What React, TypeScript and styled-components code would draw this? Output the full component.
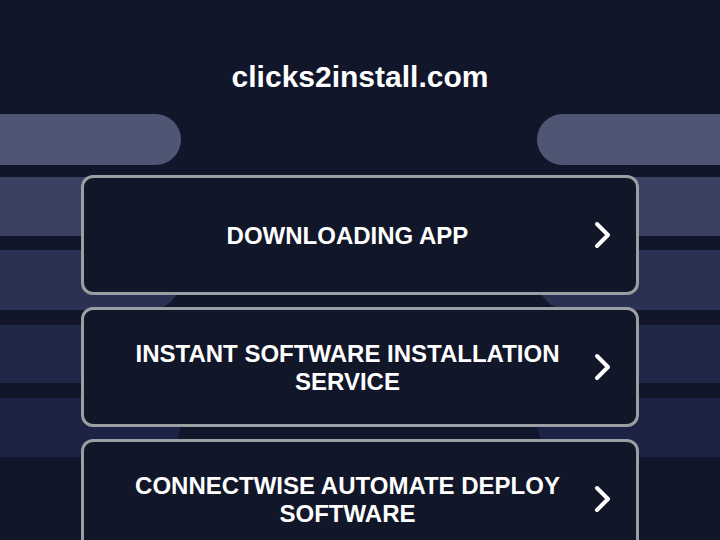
import styled, { createGlobalStyle } from 'styled-components';

const GlobalStyle = createGlobalStyle`
  html, body {
    margin: 0;
    padding: 0;
    background-color: #11162b;
  }

  body {
    font-family: 'Liberation Sans', Arial, sans-serif;
    overflow: hidden;
  }
`;

interface Stripe {
  color: string;
  height: number;
  gapBefore: number;
  reach: number;
}

const stripes: Stripe[] = [
  { color: '#4e5673', height: 51, gapBefore: 114, reach: 181 },
  { color: '#3a4162', height: 59, gapBefore: 12, reach: 200 },
  { color: '#2a3153', height: 60, gapBefore: 14, reach: 180 },
  { color: '#1f2749', height: 58, gapBefore: 15, reach: 200 },
  { color: '#1c2344', height: 59, gapBefore: 15, reach: 180 },
];

const links = [
  { id: 'download', label: 'DOWNLOADING APP' },
  { id: 'instant', label: 'INSTANT SOFTWARE INSTALLATION SERVICE' },
  { id: 'connectwise', label: 'CONNECTWISE AUTOMATE DEPLOY SOFTWARE' },
];

const ChevronIcon = () => (
  <svg width="18" height="28" viewBox="0 0 18 28" fill="none">
    <path
      d="M3 3 L14 14 L3 25"
      stroke="#ffffff"
      strokeWidth="4"
      strokeLinecap="round"
      strokeLinejoin="round"
    />
  </svg>
);

export default function App() {
  return (
    <>
      <GlobalStyle />
      <Page>
        <Backdrop>
          {stripes.map((s, i) => (
            <StripeRow key={i} $height={s.height} $gapBefore={s.gapBefore}>
              <StripeLeft $color={s.color} $reach={s.reach} />
              <StripeRight $color={s.color} $reach={s.reach} />
            </StripeRow>
          ))}
        </Backdrop>
        <Content>
          <Title>clicks2install.com</Title>
          <LinkList>
            {links.map((link) => (
              <LinkButton key={link.id} href="#">
                <LinkLabel>{link.label}</LinkLabel>
                <ChevronBox>
                  <ChevronIcon />
                </ChevronBox>
              </LinkButton>
            ))}
          </LinkList>
        </Content>
      </Page>
    </>
  );
}

const Page = styled.div`
  display: grid;
  width: 720px;
  height: 540px;
  overflow: hidden;
  background-color: #11162b;
`;

const Backdrop = styled.div`
  grid-area: 1 / 1;
  display: flex;
  flex-direction: column;
`;

const StripeRow = styled.div<{ $height: number; $gapBefore: number }>`
  display: flex;
  justify-content: space-between;
  height: ${(p) => p.$height}px;
  margin-top: ${(p) => p.$gapBefore}px;
  flex-shrink: 0;
`;

const StripeLeft = styled.div<{ $color: string; $reach: number }>`
  width: ${(p) => p.$reach}px;
  background-color: ${(p) => p.$color};
  border-radius: 0 30px 30px 0;
`;

const StripeRight = styled(StripeLeft)`
  border-radius: 30px 0 0 30px;
  width: ${(p) => p.$reach + 2}px;
`;

const Content = styled.div`
  grid-area: 1 / 1;
  display: flex;
  flex-direction: column;
  align-items: center;
  padding-top: 59px;
  z-index: 1;
`;

const Title = styled.h1`
  margin: 0;
  font-size: 30px;
  line-height: 36px;
  font-weight: 700;
  color: #ffffff;
  text-align: center;
`;

const LinkList = styled.div`
  display: flex;
  flex-direction: column;
  gap: 12px;
  margin-top: 80px;
  width: 558px;
`;

const LinkButton = styled.a`
  display: flex;
  align-items: center;
  box-sizing: border-box;
  height: 120px;
  padding: 0 24px;
  background-color: #111629;
  border: 3px solid #9b9ea3;
  border-radius: 12px;
  text-decoration: none;
  flex-shrink: 0;
`;

const LinkLabel = styled.span`
  flex: 1;
  padding: 2px 18px 0;
  font-size: 24px;
  line-height: 28px;
  font-weight: 700;
  color: #ffffff;
  text-align: center;
`;

const ChevronBox = styled.span`
  display: flex;
  align-items: center;
  justify-content: flex-end;
  width: 25px;
`;
